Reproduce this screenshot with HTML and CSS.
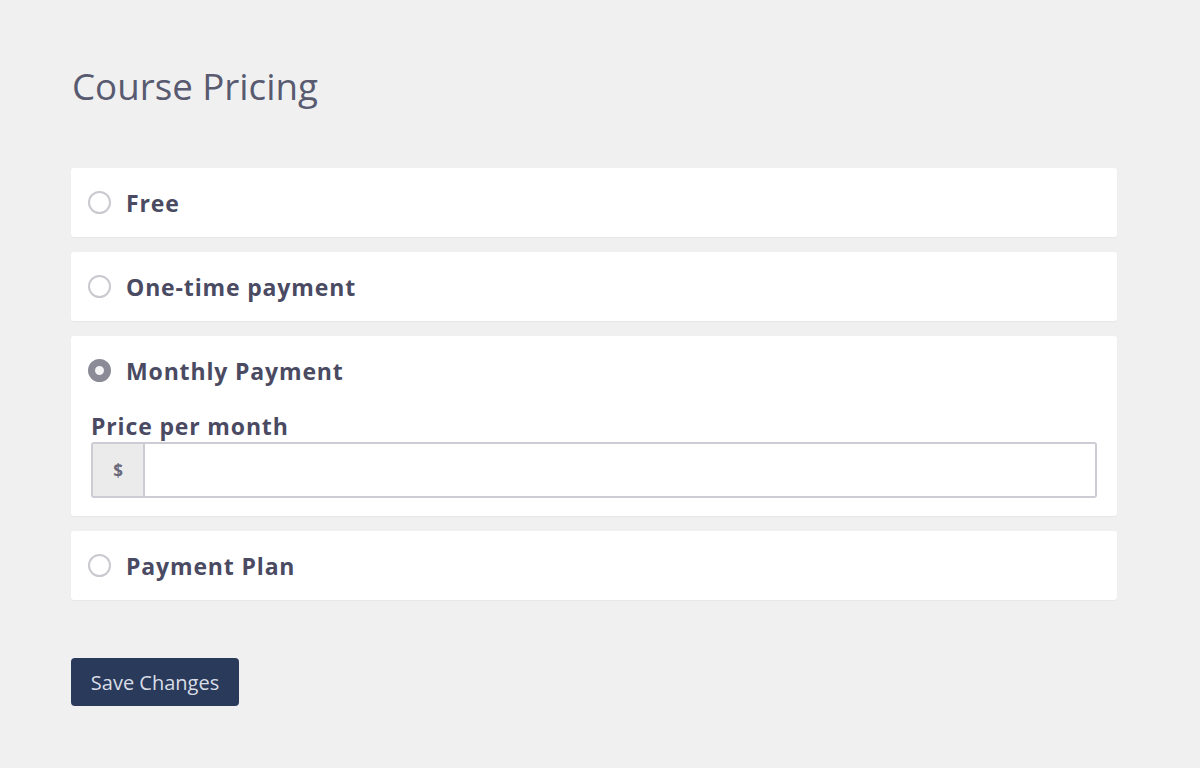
FILE: index.html
```html
<!DOCTYPE html>
<html lang="en">
<head>
  <meta charset="UTF-8" />
  <meta name="viewport" content="width=device-width, initial-scale=1" />
  <title>Course Pricing</title>
  <link rel="stylesheet" href="styles.css">
</head>
<body>

<main class="pricing">
  <h1>Course Pricing</h1>

  <form class="pricing-form">
    <div class="option">
      <label class="option-label">
        <input type="radio" name="pricing" value="free" />
        <span>Free</span>
      </label>
    </div>

    <div class="option">
      <label class="option-label">
        <input type="radio" name="pricing" value="one-time" />
        <span>One-time payment</span>
      </label>
    </div>

    <div class="option">
      <label class="option-label">
        <input type="radio" name="pricing" value="monthly" checked />
        <span>Monthly Payment</span>
      </label>
      <div class="price-field">
        <label for="price-month">Price per month</label>
        <div class="input-group">
          <span class="addon">$</span>
          <input type="text" id="price-month" />
        </div>
      </div>
    </div>

    <div class="option">
      <label class="option-label">
        <input type="radio" name="pricing" value="plan" />
        <span>Payment Plan</span>
      </label>
    </div>

    <button type="submit" class="save-btn">Save Changes</button>
  </form>
</main>

</body>
</html>
```

FILE: styles.css
```css
body {
  font-family: "Open Sans", "Liberation Sans", sans-serif;
  margin: 0;
  background-color: #f0f0f0;
  color: #4a4a62;
}
.pricing {
  padding: 62px 83px 0 71px;
}
h1 {
  font-size: 36.7px;
  font-weight: 400;
  color: #585a70;
  margin: 0 0 58px 1px;
  line-height: 48px;
}
.pricing-form {
  display: flex;
  flex-direction: column;
  gap: 15px;
}
.option {
  background-color: white;
  border-radius: 3px;
  padding: 0 19px 0 17px;
  box-shadow: 0 1px 1px rgba(0,0,0,0.04);
}
.option-label {
  display: flex;
  align-items: center;
  height: 69px;
  font-size: 23px;
  font-weight: 700;
  letter-spacing: 0.85px;
  color: #4a4a62;
  cursor: pointer;
}
.option-label input[type="radio"] {
  appearance: none;
  -webkit-appearance: none;
  width: 23px;
  height: 23px;
  margin: 0 15px 0 0;
  border: 2px solid #c9c9cf;
  border-radius: 50%;
  background: white;
  box-sizing: border-box;
}
.option-label input[type="radio"]:checked {
  border: 7px solid #8b8b98;
  background: #f4f4f6;
}
.price-field {
  margin-top: 5px;
  padding: 0 1px 18px 3px;
}
.price-field label {
  display: block;
  font-size: 23px;
  font-weight: 700;
  letter-spacing: 0.85px;
  color: #4a4a62;
  line-height: 32px;
  margin-bottom: 0;
}
.input-group {
  display: flex;
  height: 56px;
  border: 2px solid #cbccd4;
  border-radius: 3px;
  box-sizing: border-box;
}
.addon {
  width: 50px;
  background-color: #ebebeb;
  border-right: 2px solid #cbccd4;
  display: flex;
  align-items: center;
  justify-content: center;
  font-size: 17px;
  font-weight: 700;
  color: #6a6a7a;
}
.input-group input {
  flex-grow: 1;
  border: none;
  outline: none;
  font-size: 18px;
  padding: 0 12px;
  font-family: inherit;
  background: white;
}
.save-btn {
  align-self: flex-start;
  margin-top: 43px;
  width: 168px;
  height: 48px;
  background-color: #293a5b;
  color: #d9dde6;
  border: none;
  border-radius: 4px;
  font-family: inherit;
  font-size: 20px;
  cursor: pointer;
}
```
